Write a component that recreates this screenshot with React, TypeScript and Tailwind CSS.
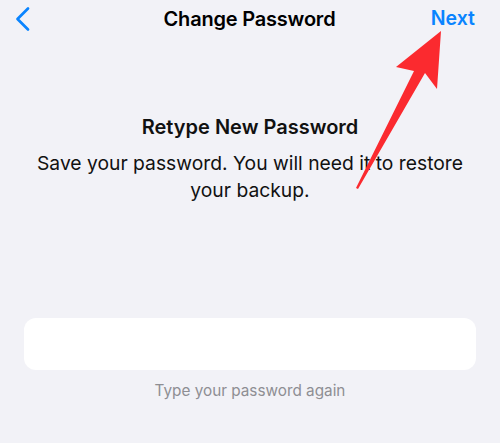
import React from "react";

export default function App() {
  return (
    <div className="relative w-[500px] h-[443px] bg-[#f2f2f7] overflow-hidden" style={{ fontFamily: "Inter, 'Noto Sans', sans-serif" }}>
      <div className="grid grid-cols-[1fr_auto_1fr] items-center h-[38px] pl-[14px] pr-[15px]">
        <svg width="18" height="26" viewBox="0 0 18 26">
          <path d="M14 2.5 L3.5 13 L14 23.5" fill="none" stroke="#0a84ff" strokeWidth="2.7" strokeLinecap="round" strokeLinejoin="round" />
        </svg>
        <div className="text-[20px] font-semibold text-black tracking-[-0.2px]">Change Password</div>
        <div className="justify-self-end text-[19.5px] font-semibold text-[#0a84ff] pr-[10px]">Next</div>
      </div>
      <div className="flex flex-col items-center mt-[75px]">
        <div className="text-[20px] font-semibold text-[#111] leading-[28px]">Retype New Password</div>
        <div className="mt-[9px] text-[19.3px] text-[#111] text-center leading-[27px] px-[30px]">
          Save your password. You will need it to restore your backup.
        </div>
      </div>
      <div className="mx-[24px] mt-[114px] h-[52px] rounded-[12px] bg-white" />
      <div className="mt-[10px] text-center text-[15.3px] text-[#8e8e93]">Type your password again</div>
      <svg className="absolute left-0 top-0" width="500" height="443" viewBox="0 0 500 443">
        <polygon points="441,31 437,89 425,73 358,189 356,188 414,71 396,67" fill="#fb2a2f" />
      </svg>
    </div>
  );
}
